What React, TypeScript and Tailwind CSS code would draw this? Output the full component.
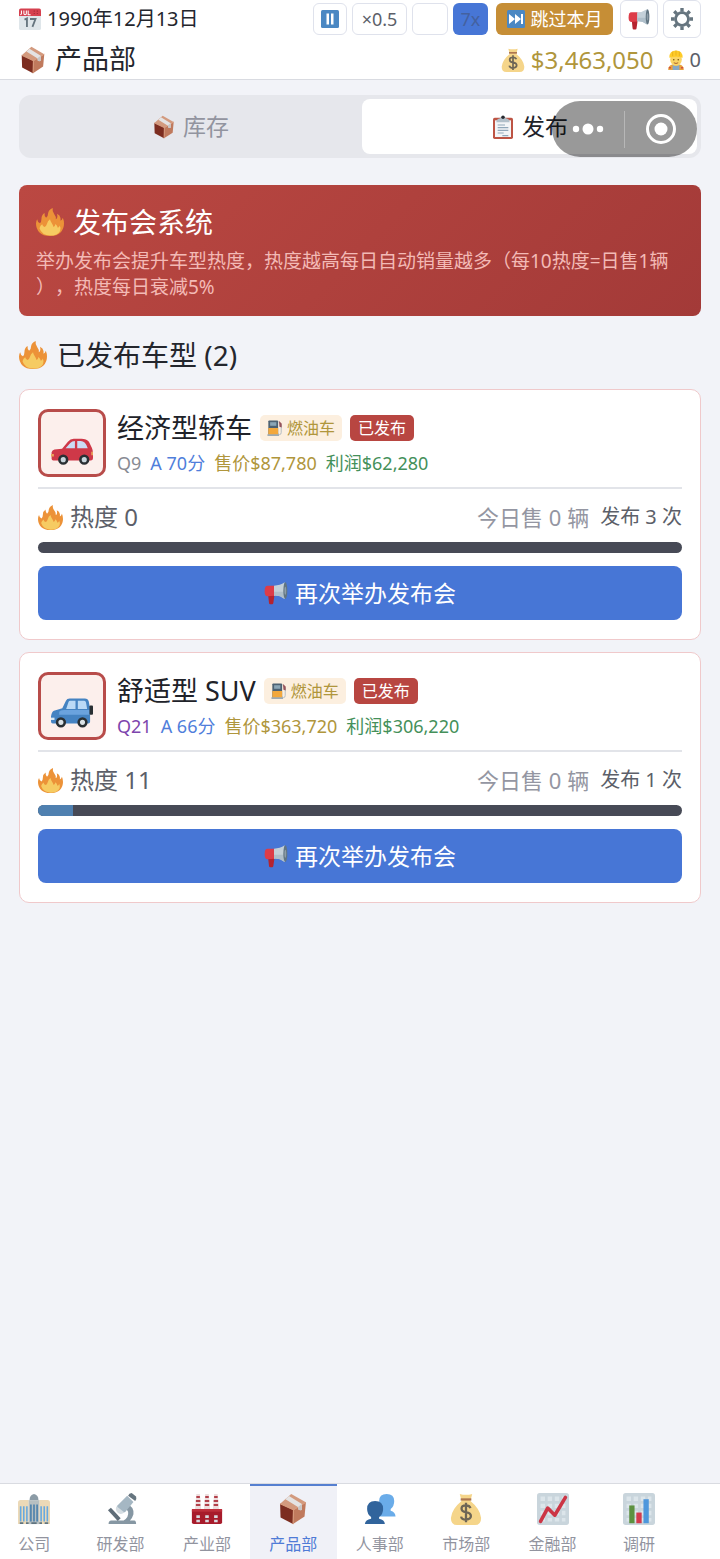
import React, { useState } from "react";
import clsx from "clsx";

interface IconProps {
  className?: string;
}

interface SvgProps extends IconProps {
  children: React.ReactNode;
}

const Svg = ({ className, children }: SvgProps) => (
  <svg viewBox="0 0 36 36" className={clsx("shrink-0", className)} aria-hidden="true">
    {children}
  </svg>
);

const CalendarIcon = ({ className }: IconProps) => (
  <Svg className={className}>
    <path d="M0 11h36v22a3 3 0 0 1-3 3H3a3 3 0 0 1-3-3z" fill="#dfe6ea" />
    <path d="M3 1h30a3 3 0 0 1 3 3v9H0V4a3 3 0 0 1 3-3z" fill="#d5404f" />
    <path d="M4 4v5q0 2-2 2M8 4v5q0 2 2 2t2-2V4M15 4v7h4" fill="none" stroke="#fff" strokeWidth="1.7" />
    <path d="M24 5h2m3 0h2M24 9h2m3 0h2" stroke="#a52c39" strokeWidth="2" />
    <path d="M9 19l4-2v14M18 18h9l-5 13" fill="none" stroke="#66757f" strokeWidth="3" />
  </Svg>
);

const BoxIcon = ({ className }: IconProps) => (
  <Svg className={className}>
    <path d="M3.500 12 16 1l16.500 9.500L18.500 19z" fill="#d39a7e" />
    <path d="M3.500 12l15 7-.5 16L4 27.500z" fill="#7c2d20" />
    <path d="M18.500 19l14-8.500L31 26.500 18 35z" fill="#c07a5d" />
    <path d="M3.500 12l15 7-.5 16M18.500 19l14-8.500" fill="none" stroke="#d99b7c" strokeWidth="1.200" />
    <path d="M9.500 7l4-3.500L28 12.500v6.500l-2 .5-2-1v-2.500z" fill="#e4e3e3" />
    <path d="M24 15.500l4-3v6.500l-2 .5-2-1z" fill="#c8c6c6" />
  </Svg>
);

const PauseIcon = ({ className }: IconProps) => (
  <Svg className={className}>
    <rect width="36" height="36" rx="3" fill="#4b88c3" />
    <path d="M11 7h5v22h-5zM20 7h5v22h-5z" fill="#fff" />
  </Svg>
);

const SkipIcon = ({ className }: IconProps) => (
  <Svg className={className}>
    <rect width="36" height="36" rx="3" fill="#4b88c3" />
    <path d="M4 8l12 10L4 28zM16 8l12 10-12 10zM28 8h4v20h-4z" fill="#fff" />
  </Svg>
);

const MegaphoneIcon = ({ className }: IconProps) => (
  <Svg className={className}>
    <path d="M6 19h10l-2 14a2 2 0 0 1-2 2H9.500a2 2 0 0 1-2-2z" fill="#b5232f" />
    <path d="M2 9q1-2 4-2h10v15l-11 1q-4-1-4-7 0-5 1-7z" fill="#dd3c48" />
    <path d="M15 7Q24 7 31 2v25q-8-6-16-5z" fill="#c3d0d9" />
    <path d="M15 16h16v11q-8-6-16-5z" fill="#afbfca" />
    <ellipse cx="32" cy="14.500" rx="3" ry="12.500" fill="#617582" />
    <ellipse cx="32" cy="14.500" rx="1.300" ry="6" fill="#8d9da8" />
  </Svg>
);

const GearIcon = ({ className }: IconProps) => (
  <Svg className={className}>
    <circle cx="18" cy="18" r="10.500" fill="none" stroke="#66757f" strokeWidth="4.500" />
    <g stroke="#66757f" strokeWidth="5.500">
      <path d="M18 0v6M18 30v6M0 18h6M30 18h6" />
      <path d="M18 0v6M18 30v6M0 18h6M30 18h6" transform="rotate(45 18 18)" />
    </g>
  </Svg>
);

const MoneyIcon = ({ className }: IconProps) => (
  <Svg className={className}>
    <path d="M11 1q7 2 14 0l-2 8q11 9 12 19 0 8-7 8H8q-7 0-7-8 1-10 12-19z" fill="#f5d58a" />
    <path d="M12 6h12v2.500H12z" fill="#ad7650" />
    <path d="M23 17q-1-3-5-3-5 0-5 3.500t5 4q5.500 1 5.500 4.500t-5.500 4q-5 0-5.500-3.500M18 11v22" fill="none" stroke="#6e6656" strokeWidth="2.600" />
  </Svg>
);

const WorkerIcon = ({ className }: IconProps) => (
  <Svg className={className}>
    <path d="M4 36q0-9 8-10h12q8 1 8 10z" fill="#e8a13c" />
    <path d="M12 26l6 3 6-3v10H12z" fill="#87a8c4" />
    <path d="M5 32h4m18 0h4" stroke="#d24f3b" strokeWidth="3" />
    <ellipse cx="18" cy="17" rx="10.500" ry="11.500" fill="#fbd565" />
    <path d="M6 14Q6 1 18 1t12 13q-12-4-24 0z" fill="#ffcc29" />
    <path d="M18 1v9M12 3v8M24 3v8" stroke="#e6ad1a" strokeWidth="1.500" />
    <circle cx="14" cy="17.500" r="1.300" fill="#664500" />
    <circle cx="22" cy="17.500" r="1.300" fill="#664500" />
    <path d="M14 23q4 2.500 8 0" fill="none" stroke="#a25424" strokeWidth="1.600" />
  </Svg>
);

const ClipboardIcon = ({ className }: IconProps) => (
  <Svg className={className}>
    <rect x="3" y="4" width="30" height="32" rx="2.500" fill="#bd5444" />
    <path d="M6 8h24v25H6z" fill="#f3f5f7" />
    <path d="M10 15h11M10 19h16M10 23h16M10 27h9M17 31h9" stroke="#91a8ba" strokeWidth="1.700" />
    <path d="M8 11q0-5 6-6 0-3 4-3t4 3q6 1 6 6z" fill="#b2c0ca" />
    <circle cx="18" cy="3.500" r="2.600" fill="#26292f" />
  </Svg>
);

const FireIcon = ({ className }: IconProps) => (
  <Svg className={className}>
    <path
      d="M0 20Q0 17 1.500 14.500 2 18.500 5 19.500 7 18 7 14 7 9 11 6.500 10.500 10 13 12.500 15.500 11 15.500 7 16 2.500 21.500 0 20.500 4 23.500 8 26 11 25.500 14.500 27.500 14 27.500 11 27.500 9 27 7.500 31 9 31.500 13 31.700 15 31.500 16.500 33.500 15.500 34.500 12.500 36 16 36 20 36 27 31.500 31.500 27 36 18 36 9 36 4.500 31.500 0 27 0 20z"
      fill="#ec9238"
    />
    <path
      d="M4.500 26Q5.500 22.500 8 21 8.500 24 11 24.500 13 24 14 20.500 15 16.500 18 14.500 18.500 17.500 20.500 20 22 22 22.500 24.500 24.500 23.500 25 20.500 27.500 22.500 28 25.500 30 25 30.500 22.500 32.500 26 31 29.500 28 35.500 18 35.500 7.500 35 4.500 26z"
      fill="#f6cb62"
    />
  </Svg>
);

const FuelIcon = ({ className }: IconProps) => (
  <Svg className={className}>
    <path d="M27 5l5 6v17q0 5-4 5t-4-5v-7" fill="none" stroke="#aab7c0" strokeWidth="2" />
    <path d="M27 2l6 6v9l-5-2z" fill="#97545b" />
    <rect x="3" y="1" width="22" height="33" rx="2" fill="#4d6273" />
    <path d="M7 5h14v8H7z" fill="#8ba6b6" />
    <path d="M3 18h22v16H3z" fill="#f3a83c" />
    <path d="M1 32h26v4H1z" fill="#9daab3" />
  </Svg>
);

const SedanIcon = ({ className }: IconProps) => (
  <Svg className={className}>
    <path
      d="M.5 25.500V20Q1 17.800 3 17.500L9.500 17 14.500 11Q16.500 8.300 19.500 8.300H26Q30.500 8.300 32.500 11L35 16Q36 18 36 21V25Q36 27 34 27H2Q.5 27 .5 25.500z"
      fill="#cf3848"
    />
    <path d="M12.500 16.500 16.500 12Q18 10.300 20.500 10.300V16.500zM22.500 10.300H25.500Q29.500 10.300 31.500 16.500H22.500z" fill="#cbdcf5" />
    <path d="M0 21.500h2.500v2H0zM34.500 19.500H36v3h-1.500z" fill="#e9a25b" />
    <g fill="#c9d6dd" stroke="#292f33" strokeWidth="2.200">
      <circle cx="10.500" cy="26.300" r="3.300" />
      <circle cx="28.500" cy="26.300" r="3.300" />
    </g>
  </Svg>
);

const SuvIcon = ({ className }: IconProps) => (
  <Svg className={className}>
    <path
      d="M0 25V21Q.5 17 2.500 16L9.700 14 12.800 7.500Q13.600 5.500 16 5.500H29Q31.800 5.500 32.300 8L33.500 14V25.500Q33.500 27 32 27H1.500Q0 27 0 25z"
      fill="#4583c2"
    />
    <path d="M7 17q1-1.500 4-1.500h22v4H7z" fill="#6ba3de" />
    <path d="M13 14.500 15 8.500Q15.400 7.500 16.500 7.500H21V14.500zM23 7.500H28.500Q29.800 7.500 30 9L31 14.500H23z" fill="#bad9f6" />
    <rect x="33" y="11.500" width="3" height="8" rx=".8" fill="#292f33" />
    <path d="M0 22h3v2H0z" fill="#d9e8f3" />
    <g fill="#dbe2e6" stroke="#292f33" strokeWidth="2.200">
      <circle cx="8.500" cy="26" r="3.300" />
      <circle cx="27" cy="26" r="3.300" />
    </g>
  </Svg>
);

const CompanyIcon = ({ className }: IconProps) => (
  <Svg className={className}>
    <path d="M0 11q0-3 3-3h9v27H0zM24 8h9q3 0 3 3v24H24z" fill="#ecd9b7" />
    <path d="M13 8q0-6 5-7 5 1 5 7z" fill="#8b9ba6" />
    <path d="M12 8h12v27H12z" fill="#b7bfc1" />
    <path d="M3 15v17M6.500 15v17M10 15v17M26 15v17M29.500 15v17M33 15v17" stroke="#68a9df" strokeWidth="1.800" />
    <path d="M14.500 13v19M18 13v19M21.500 13v19" stroke="#5586ae" strokeWidth="2" />
    <path d="M2 34h4m3 0h3m3 0h6m3 0h3m3 0h4" stroke="#5f7480" strokeWidth="2" />
  </Svg>
);

const MicroscopeIcon = ({ className }: IconProps) => (
  <Svg className={className}>
    <path d="M24 12q9 3 8 12-1 4-4 7h5q2 0 2 4H4q0-4 3-4h14q6-4 5-10-1-3-5-4z" fill="#8697a3" />
    <path d="M5 18l11 12" stroke="#5f6d78" strokeWidth="4.500" />
    <path d="M14 14l11-11 7 7-9 11q-5 3-8 1-3-3-1-8z" fill="#a5b7c3" />
    <path d="M13 15l9 7q-5 3-8 0t-1-7z" fill="#d5dde2" />
    <path d="M26 3q1-3 4-3l5 4q1 3-1 5z" fill="#66757f" />
  </Svg>
);

const FactoryIcon = ({ className }: IconProps) => (
  <Svg className={className}>
    <path d="M4.500 19L6 1h4l1.500 18zM14.500 19L16 1h4l1.500 18zM24.500 19L26 1h4l1.500 18z" fill="#ecdcdd" />
    <path d="M6 4.500h4M5.500 9h5M5.500 13.500h5M16 4.500h4M15.500 9h5M15.500 13.500h5M26 4.500h4M25.500 9h5M25.500 13.500h5" stroke="#b3404a" strokeWidth="2" />
    <path d="M1 19h34v14q0 2-2 2H3q-2 0-2-2z" fill="#a71b2b" />
    <path d="M1 18h34v3H1z" fill="#be2f3c" />
    <path d="M6 25h4v3H6zM16 25h4v3h-4zM26 25h4v3h-4zM6 30h4v3H6zM16 30h4v3h-4zM26 30h4v3h-4z" fill="#d7d9df" />
  </Svg>
);

const PeopleIcon = ({ className }: IconProps) => (
  <Svg className={className}>
    <path d="M17 9q0-8 8.500-8T34 9q0 6-4 9v2q5 1 5.500 6.500H17z" fill="#6aace9" />
    <path d="M3.500 18q0-9 9-9t9 9q0 6-4.500 9v2q6 1 6.500 6H1q.5-5 7-6v-2Q3.500 24 3.500 18z" fill="#31649c" />
  </Svg>
);

const ChartGrid = () => (
  <>
    <rect width="36" height="36" rx="3" fill="#c9d5dc" />
    <path d="M4 4h5v5H4zM12 4h5v5h-5zM20 4h5v5h-5zM28 4h4v5h-4zM4 12h5v5H4zM12 12h5v5h-5zM20 12h5v5h-5zM28 12h4v5h-4zM4 20h5v5H4zM12 20h5v5h-5zM20 20h5v5h-5zM28 20h4v5h-4zM4 28h5v4H4zM12 28h5v4h-5zM20 28h5v4h-5zM28 28h4v4h-4z" fill="#dce5ea" />
  </>
);

const FinanceIcon = ({ className }: IconProps) => (
  <Svg className={className}>
    <ChartGrid />
    <path d="M4 32l8-15 8 8L32 5" fill="none" stroke="#cc3545" strokeWidth="4" strokeLinecap="round" strokeLinejoin="round" />
  </Svg>
);

const ResearchIcon = ({ className }: IconProps) => (
  <Svg className={className}>
    <ChartGrid />
    <path d="M7 14h6v20H7z" fill="#5c9140" />
    <path d="M15 22h6v12h-6z" fill="#d43a4d" />
    <path d="M23 7h6v27h-6z" fill="#4e97dc" />
  </Svg>
);

interface Model {
  name: string;
  Icon: (props: IconProps) => React.ReactElement;
  quality: string;
  qualityClass: string;
  grade: string;
  price: string;
  profit: string;
  heat: number;
  soldToday: number;
  launches: number;
}

const models: Model[] = [
  {
    name: "经济型轿车",
    Icon: SedanIcon,
    quality: "Q9",
    qualityClass: "text-[#888b93]",
    grade: "A 70分",
    price: "$87,780",
    profit: "$62,280",
    heat: 0,
    soldToday: 0,
    launches: 3,
  },
  {
    name: "舒适型 SUV",
    Icon: SuvIcon,
    quality: "Q21",
    qualityClass: "text-[#7d45ad]",
    grade: "A 66分",
    price: "$363,720",
    profit: "$306,220",
    heat: 11,
    soldToday: 0,
    launches: 1,
  },
];

const departments = [
  { label: "公司", Icon: CompanyIcon },
  { label: "研发部", Icon: MicroscopeIcon },
  { label: "产业部", Icon: FactoryIcon },
  { label: "产品部", Icon: BoxIcon },
  { label: "人事部", Icon: PeopleIcon },
  { label: "市场部", Icon: MoneyIcon },
  { label: "金融部", Icon: FinanceIcon },
  { label: "调研", Icon: ResearchIcon },
];

const speedButton =
  "flex h-8 items-center justify-center rounded-md border border-[#dfe2ec] bg-white text-[18px] text-[#5c5f69]";

const Header = () => (
  <header className="border-b border-[#d9dbe1] bg-white px-[19px]">
    <div className="flex h-[38px] items-center justify-between">
      <div className="flex items-center gap-[6px] text-[20px] text-[#24262d]">
        <CalendarIcon className="size-[22px]" />
        <span>1990年12月13日</span>
      </div>
      <div className="flex items-center gap-[5px]">
        <button type="button" aria-label="暂停" className={clsx(speedButton, "w-[34px]")}>
          <PauseIcon className="size-[18px]" />
        </button>
        <button type="button" className={clsx(speedButton, "w-[55px]")}>×0.5</button>
        <button type="button" aria-label="×1" className={clsx(speedButton, "w-9")} />
        <button
          type="button"
          className="h-8 w-[35px] rounded-md bg-[#4776d6] text-[18px] text-[#44619f]"
        >
          7x
        </button>
        <button
          type="button"
          className="mr-[2px] ml-[3px] flex h-8 w-[117px] items-center justify-center gap-[6px] rounded-md bg-[#c68e36] text-[18px] text-white"
        >
          <SkipIcon className="size-[18px]" />
          跳过本月
        </button>
        <button
          type="button"
          aria-label="公告"
          className="flex h-[38px] w-[38px] items-center justify-center rounded-md border border-[#dfe2ec] bg-white"
        >
          <MegaphoneIcon className="size-[22px]" />
        </button>
        <button
          type="button"
          aria-label="设置"
          className="flex h-[38px] w-[38px] items-center justify-center rounded-md border border-[#dfe2ec] bg-white"
        >
          <GearIcon className="size-[22px]" />
        </button>
      </div>
    </div>

    <div className="flex h-[41px] items-center justify-between pt-[2px]">
      <h1 className="flex items-center gap-2 text-[27px] text-[#24262d]">
        <BoxIcon className="size-7" />
        产品部
      </h1>
      <div className="flex items-center gap-3">
        <span className="flex items-center gap-[6px] text-[24px] text-[#b0963c]">
          <MoneyIcon className="size-6" />
          $3,463,050
        </span>
        <span className="flex items-center gap-1 text-[20px] text-[#5c5f69]">
          <WorkerIcon className="size-5" />0
        </span>
      </div>
    </div>
  </header>
);

const ModelCard = ({ model }: { model: Model }) => (
  <article className="rounded-[10px] border border-[#f0c9cb] bg-white px-[18px] py-[19px]">
    <div className="flex items-center gap-[11px] border-b-2 border-[#e2e4e9] pb-[10px]">
      <div className="flex size-[68px] shrink-0 items-center justify-center rounded-[10px] border-3 border-[#b84c4a] bg-[#fcefec] pt-[14px]">
        <model.Icon className="size-[42px]" />
      </div>
      <div>
        <div className="flex h-9 items-center gap-2">
          <h3 className="text-[27px] text-[#202229]">{model.name}</h3>
          <span className="flex h-[26px] items-center gap-1 rounded-[5px] bg-[#fcefdf] px-[7px] text-[16px] text-[#b0963c]">
            <FuelIcon className="size-4" />
            燃油车
          </span>
          <span className="flex h-[26px] items-center rounded-[5px] bg-[#b84641] px-2 text-[16px] text-white">
            已发布
          </span>
        </div>
        <p className="mt-1 flex gap-[9px] text-[18px] leading-[26px]">
          <span className={model.qualityClass}>{model.quality}</span>
          <span className="text-[#4f7edb]">{model.grade}</span>
          <span className="text-[#b0963c]">售价{model.price}</span>
          <span className="text-[#44905a]">利润{model.profit}</span>
        </p>
      </div>
    </div>

    <div className="mt-2 flex h-10 items-center justify-between">
      <span className="flex items-center gap-[7px] text-[24px] text-[#5c5f69]">
        <FireIcon className="size-[25px]" />
        热度 {model.heat}
      </span>
      <span className="flex items-center gap-[11px]">
        <span className="text-[22px] text-[#9496a2]">今日售 {model.soldToday} 辆</span>
        <span className="text-[20px] text-[#5c5f69]">发布 {model.launches} 次</span>
      </span>
    </div>

    <div className="mt-[5px] h-[11px] overflow-hidden rounded-full bg-[#474a56]">
      <div className="h-full bg-[#4f80b0]" style={{ width: `${model.heat / 2}%` }} />
    </div>

    <button
      type="button"
      className="mt-[13px] flex h-[54px] w-full items-center justify-center gap-[7px] rounded-lg bg-[#4776d6] text-[23px] text-white"
    >
      <MegaphoneIcon className="size-6" />
      再次举办发布会
    </button>
  </article>
);

const App = (): React.JSX.Element => {
  const [tab, setTab] = useState<string>("发布");
  const [department, setDepartment] = useState<string>("产品部");

  const tabs = [
    { label: "库存", Icon: BoxIcon },
    { label: "发布", Icon: ClipboardIcon },
  ];

  return (
    <div className="flex min-h-screen flex-col bg-[#f2f3f8] font-['Noto_Sans','Noto_Sans_CJK_SC',sans-serif]">
      <Header />

      <main className="flex-1 px-[19px] pt-[15px]">
        <div className="relative">
          <div role="tablist" className="flex h-[63px] gap-1 rounded-xl bg-[#e6e7ec] p-1">
            {tabs.map(({ label, Icon }) => (
              <button
                key={label}
                type="button"
                role="tab"
                aria-selected={tab === label}
                onClick={() => setTab(label)}
                className={clsx(
                  "flex flex-1 items-center justify-center gap-[7px] rounded-lg text-[23px]",
                  tab === label ? "bg-white text-[#202229]" : "text-[#92949f]"
                )}
              >
                <Icon className="size-6" />
                {label}
              </button>
            ))}
          </div>

          {/** Floating mini program menu */}
          <div className="absolute top-[6px] right-1 flex h-14 w-[145px] items-center rounded-full bg-black/40">
            <button type="button" aria-label="更多" className="flex h-full flex-1 items-center justify-center">
              <svg viewBox="0 0 32 12" className="h-3 w-8" fill="#fff" aria-hidden="true">
                <circle cx="4" cy="6" r="3.200" />
                <circle cx="16" cy="6" r="5.500" />
                <circle cx="28" cy="6" r="3.200" />
              </svg>
            </button>
            <span className="h-[37px] w-px bg-white/30" />
            <button type="button" aria-label="关闭" className="flex h-full flex-1 items-center justify-center">
              <svg viewBox="0 0 32 32" className="size-8" aria-hidden="true">
                <circle cx="16" cy="16" r="13.500" fill="none" stroke="#fff" strokeWidth="3" />
                <circle cx="16" cy="16" r="6.500" fill="#fff" />
              </svg>
            </button>
          </div>
        </div>

        <section className="mt-[27px] rounded-lg bg-linear-135 from-[#bb4842] to-[#a33a38] px-[17px] pt-[17px] pb-4">
          <h2 className="flex h-10 items-center gap-[9px] text-[28px] text-white">
            <FireIcon className="size-7" />
            发布会系统
          </h2>
          <p className="mt-[6px] text-[19px] leading-[26px] text-[#f3bab6] [line-break:anywhere] [text-spacing-trim:space-all]">
            举办发布会提升车型热度，热度越高每日自动销量越多（每10热度=日售1辆），热度每日衰减5%
          </p>
        </section>

        <h2 className="mt-[18px] flex h-[42px] items-center gap-[10px] text-[28px] text-[#24262d]">
          <FireIcon className="size-7" />
          已发布车型 ({models.length})
        </h2>

        <div className="mt-[13px] flex flex-col gap-3">
          {models.map((model) => (
            <ModelCard key={model.name} model={model} />
          ))}
        </div>
      </main>

      <nav className="overflow-hidden border-t border-[#d9dbe1] bg-white">
        <div className="-ml-[9px] flex w-full">
          {departments.map(({ label, Icon }) => (
            <button
              key={label}
              type="button"
              onClick={() => setDepartment(label)}
              className={clsx(
                "flex h-[75px] w-[12%] shrink-0 flex-col items-center border-t-2 pt-[7px] text-[16px] leading-[22px]",
                department === label
                  ? "border-[#557fd0] bg-[#f0f1f7] text-[#4f7bd6]"
                  : "border-transparent text-[#92949f]"
              )}
            >
              <Icon className="mb-2 size-8" />
              {label}
            </button>
          ))}
        </div>
      </nav>
    </div>
  );
};

export default App;
